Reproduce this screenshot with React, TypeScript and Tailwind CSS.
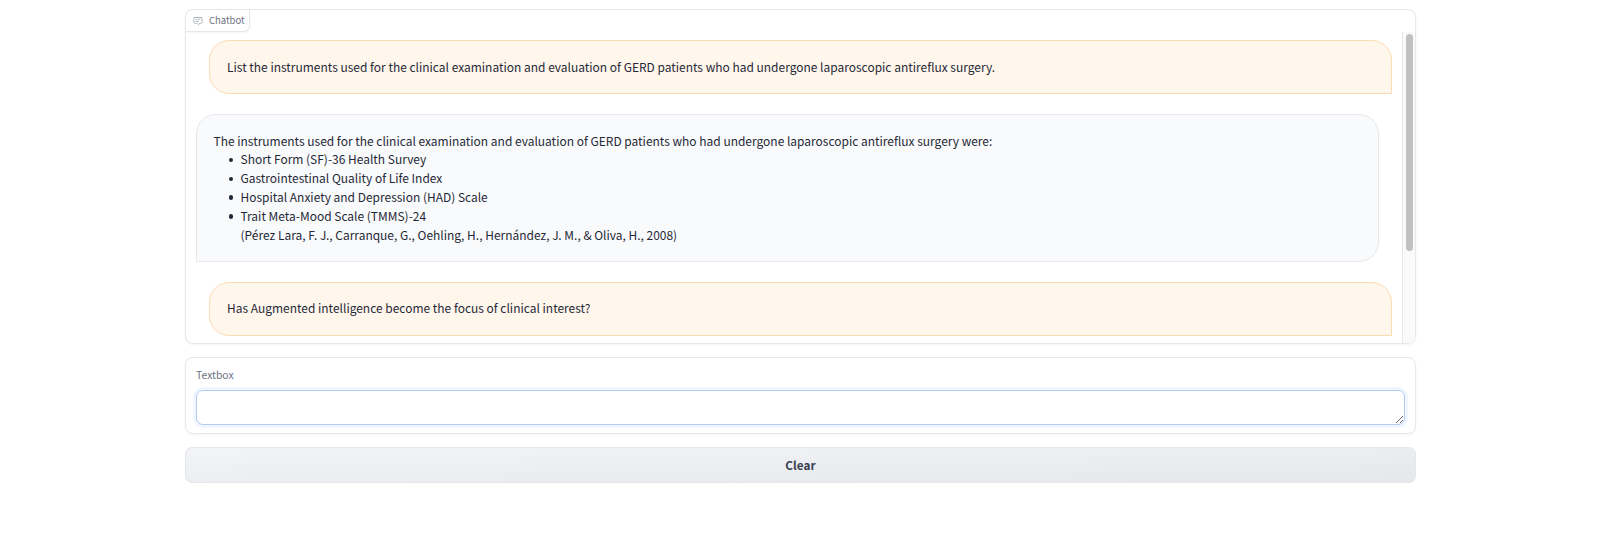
import type { ReactNode } from 'react';

const instruments = [
  'Short Form (SF)-36 Health Survey',
  'Gastrointestinal Quality of Life Index',
  'Hospital Anxiety and Depression (HAD) Scale',
];

function ChatIcon() {
  return (
    <svg viewBox="0 0 32 32" className="h-[10px] w-[10px] shrink-0" fill="#8b929e">
      <path d="M17.74 30 16 29l4-7h6a2 2 0 0 0 2-2V8a2 2 0 0 0-2-2H6a2 2 0 0 0-2 2v12a2 2 0 0 0 2 2h9v2H6a4 4 0 0 1-4-4V8a4 4 0 0 1 4-4h20a4 4 0 0 1 4 4v12a4 4 0 0 1-4 4h-4.84Z" />
      <path d="M8 10h16v2H8zM8 16h10v2H8z" />
    </svg>
  );
}

function UserMessage({ children }: { children: ReactNode }) {
  return (
    <div className="ml-[23px] mr-[10px] flex h-[54px] shrink-0 flex-col rounded-[20px] rounded-br-none border border-[#fbdcb4] bg-[#fff6ec] px-[17px] pt-[17px] last:pt-[16px]">
      {children}
    </div>
  );
}

function Bullet({ children }: { children: ReactNode }) {
  return (
    <li className="flex gap-[7.5px]">
      <span className="mt-[7.3px] h-[4.5px] w-[4.5px] shrink-0 rounded-full bg-[#1f2937]" />
      <div>{children}</div>
    </li>
  );
}

export default function App() {
  return (
    <main className="flex h-[541px] flex-col bg-white pl-[185px] pr-[184px] pt-[9px] font-['Noto_Sans_CJK_SC',sans-serif] text-[11.97px] leading-[18.8px] text-[#1f2937]">
      <section className="flex h-[335px] shrink-0 flex-col overflow-hidden rounded-[8px] border border-[#e5e7eb] shadow-[0_1px_2px_rgba(0,0,0,0.05)]">
        <div className="flex h-[22px] w-[64px] shrink-0 items-center gap-[6px] rounded-br-[6px] border-b border-r border-[#e5e7eb] pl-[7px] text-[9.5px] text-[#6b7280] shadow-[0_1px_2px_rgba(0,0,0,0.05)]">
          <ChatIcon />
          <span>Chatbot</span>
        </div>
        <div className="flex min-h-0 flex-1">
          <div className="flex min-w-0 flex-1 flex-col gap-[20px] pt-[8px]">
            <UserMessage>List the instruments used for the clinical examination and evaluation of GERD patients who had undergone laparoscopic antireflux surgery.</UserMessage>
            <div className="ml-[10px] mr-[23px] h-[148px] shrink-0 rounded-[20px] rounded-bl-none border border-[#e5e7eb] bg-[#f9fafb] px-[16.5px] pt-[16.7px]">
              <p>The instruments used for the clinical examination and evaluation of GERD patients who had undergone laparoscopic antireflux surgery were:</p>
              <ul className="pl-[15px]">
                {instruments.map((name) => (
                  <Bullet key={name}>{name}</Bullet>
                ))}
                <Bullet>
                  Trait Meta-Mood Scale (TMMS)-24
                  <br />
                  (Pérez Lara, F. J., Carranque, G., Oehling, H., Hernández, J. M., &amp; Oliva, H., 2008)
                </Bullet>
              </ul>
            </div>
            <UserMessage>Has Augmented intelligence become the focus of clinical interest?</UserMessage>
          </div>
          <div className="w-[13px] shrink-0 border-l border-[#e8e8e8] bg-[#fafafa] pl-[3px] pt-[2px]">
            <div className="h-[217px] w-[7px] rounded-full bg-[#c1c1c1]" />
          </div>
        </div>
      </section>

      <section className="mt-[13px] flex h-[77px] shrink-0 flex-col rounded-[8px] border border-[#e5e7eb] px-[10px] pt-[8px] shadow-[0_1px_2px_rgba(0,0,0,0.05)]">
        <label htmlFor="message" className="text-[10.4px] text-[#6b7280]">Textbox</label>
        <textarea
          id="message"
          className="mt-[5px] h-[35px] w-full shrink-0 resize-y rounded-[7px] border border-[#b1cbf5] bg-white shadow-[0_0_0_3px_#eff6ff] outline-none"
        />
      </section>

      <button className="mt-[13px] h-[36px] shrink-0 rounded-[7px] border border-[#e5e7eb] bg-linear-to-br from-[#f3f4f6] to-[#e5e7eb] pt-px text-[11.8px] font-bold text-[#374151]">
        Clear
      </button>
    </main>
  );
}
